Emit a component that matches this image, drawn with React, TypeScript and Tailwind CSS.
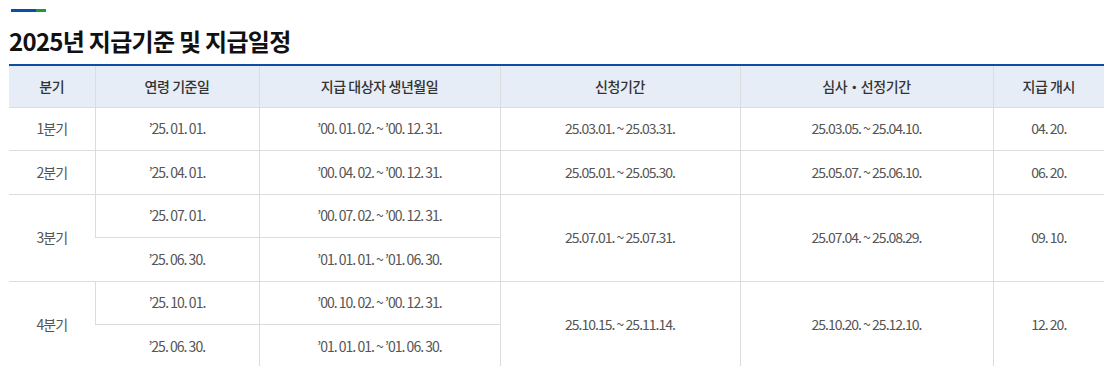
const font = { fontFamily: '"Noto Sans CJK KR", "Noto Sans", sans-serif' };

const rows = [
  { q: "1분기", ages: [["’25. 01. 01.", "’00. 01. 02. ~ ’00. 12. 31."]], apply: "25.03.01. ~ 25.03.31.", review: "25.03.05. ~ 25.04.10.", pay: "04. 20." },
  { q: "2분기", ages: [["’25. 04. 01.", "’00. 04. 02. ~ ’00. 12. 31."]], apply: "25.05.01. ~ 25.05.30.", review: "25.05.07. ~ 25.06.10.", pay: "06. 20." },
  {
    q: "3분기",
    ages: [
      ["’25. 07. 01.", "’00. 07. 02. ~ ’00. 12. 31."],
      ["’25. 06. 30.", "’01. 01. 01. ~ ’01. 06. 30."],
    ],
    apply: "25.07.01. ~ 25.07.31.",
    review: "25.07.04. ~ 25.08.29.",
    pay: "09. 10.",
  },
  {
    q: "4분기",
    ages: [
      ["’25. 10. 01.", "’00. 10. 02. ~ ’00. 12. 31."],
      ["’25. 06. 30.", "’01. 01. 01. ~ ’01. 06. 30."],
    ],
    apply: "25.10.15. ~ 25.11.14.",
    review: "25.10.20. ~ 25.12.10.",
    pay: "12. 20.",
  },
];

const headers = ["분기", "연령 기준일", "지급 대상자 생년월일", "신청기간", "심사・선정기간", "지급 개시"];
const widths = ["w-[86px]", "w-[164px]", "w-[241px]", "w-[240px]", "w-[253px]", "w-[111px]"];

const td = "border-b border-l border-[#dcdcdc] text-center text-[14px] tracking-[-0.07em] text-[#555] first:border-l-0";

export default function App() {
  return (
    <div className="h-[366px] w-[1104px] overflow-hidden bg-white" style={font}>
      <div className="pl-[11px] pt-[9px]">
        <div className="flex h-[3px] w-[35px]">
          <span className="w-[25px] bg-[#0b4ea2]" />
          <span className="w-[10px] bg-[#1a9c3e]" />
        </div>
      </div>
      <h2 className="mt-[14px] pl-[9px] text-[24px] font-bold leading-[30px] tracking-[-0.03em] text-[#111]">
        2025년 지급기준 및 지급일정
      </h2>
      <div className="mt-[8px] pl-[9px]">
        <table className="w-[1095px] table-fixed border-collapse border-t-2 border-[#0b4ea2]">
          <colgroup>
            {widths.map((w) => (
              <col key={w} className={w} />
            ))}
          </colgroup>
          <thead>
            <tr className="h-[42px] bg-[#e6edf6]">
              {headers.map((h) => (
                <th key={h} className="border-b border-l border-[#dcdcdc] text-center text-[14px] font-medium tracking-[-0.03em] text-[#333] first:border-l-0">
                  {h}
                </th>
              ))}
            </tr>
          </thead>
          <tbody>
            {rows.map((r) =>
              r.ages.map((a, i) => (
                <tr key={r.q + i} className="h-[43.5px]">
                  {i === 0 && (
                    <td rowSpan={r.ages.length} className={td}>
                      {r.q}
                    </td>
                  )}
                  <td className={td}>{a[0]}</td>
                  <td className={td}>{a[1]}</td>
                  {i === 0 && (
                    <>
                      <td rowSpan={r.ages.length} className={td}>{r.apply}</td>
                      <td rowSpan={r.ages.length} className={td}>{r.review}</td>
                      <td rowSpan={r.ages.length} className={td}>{r.pay}</td>
                    </>
                  )}
                </tr>
              ))
            )}
          </tbody>
        </table>
      </div>
    </div>
  );
}
